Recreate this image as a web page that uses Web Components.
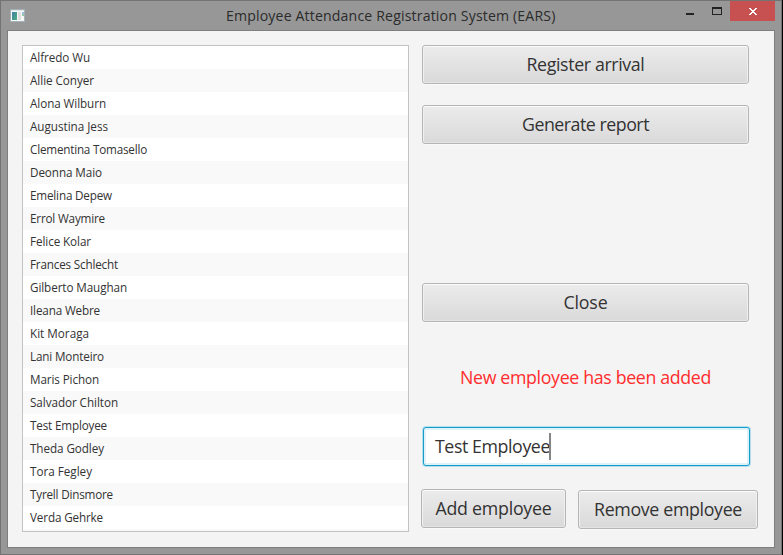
<!DOCTYPE html>
<html lang="en">
<head>
<meta charset="utf-8">
<title>Employee Attendance Registration System (EARS)</title>
<style>
html, body { margin: 0; height: 100%; overflow: hidden; font-family: "Open Sans", "Noto Sans", sans-serif; color: #333; }
</style>
</head>
<body>
<ears-window></ears-window>
<script>
// Single line of text whose tracking is adjusted to span a given width.
class FitText extends HTMLElement {
  constructor() {
    super();
    this.attachShadow({ mode: 'open' }).innerHTML =
      '<style>:host{display:inline-block;white-space:pre;line-height:inherit}span{display:inline-block}</style><span><slot></slot></span>';
  }
  connectedCallback() {
    const target = Number(this.getAttribute('width'));
    const span = this.shadowRoot.querySelector('span');
    const n = this.textContent.length;
    const natural = span.getBoundingClientRect().width;
    span.style.letterSpacing = ((target - natural) / n).toFixed(3) + 'px';
  }
}

class FxButton extends HTMLElement {
  constructor() {
    super();
    this.attachShadow({ mode: 'open' }).innerHTML = `<style>
      :host{display:block;height:39px;box-sizing:border-box}
      button{display:flex;align-items:center;justify-content:center;width:100%;height:39px;box-sizing:border-box;margin:0;padding:0 0 1px;
        border:1px solid #b5b5b5;border-radius:3px;background:linear-gradient(#ececec,#d9d9d9);
        box-shadow:inset 0 1px #fbfbfb,inset 1px 0 #f0f0f0,inset -1px 0 #f0f0f0,inset 0 -1px #e4e4e4,0 1px #f9f9f9;
        font:17.8px/24px "Open Sans","Noto Sans",sans-serif;color:#333}
    </style><button type="button"><slot></slot></button>`;
  }
}

class FxField extends HTMLElement {
  constructor() {
    super();
    this.attachShadow({ mode: 'open' }).innerHTML = `<style>
      :host{display:flex;align-items:center;box-sizing:border-box;width:327px;height:39px;padding:0 11px 1px 11px;
        border:1px solid #149ccb;border-radius:3px;background:#fff;
        box-shadow:0 0 0 1px #b5dfed,inset 0 0 0 2px #e0f2f9;font-size:17.8px;line-height:24px}
      i{width:2px;height:27px;background:#858585;margin:1px 0 0 -1px}
    </style><slot></slot><i></i>`;
  }
}

class EmployeeList extends HTMLElement {
  connectedCallback() {
    const rows = [['Alfredo Wu',60],['Allie Conyer',64],['Alona Wilburn',76],['Augustina Jess',78],['Clementina Tomasello',117],
      ['Deonna Maio',72],['Emelina Depew',82],['Errol Waymire',75],['Felice Kolar',61],['Frances Schlecht',88],
      ['Gilberto Maughan',97],['Ileana Webre',70],['Kit Moraga',59],['Lani Monteiro',74],['Maris Pichon',69],
      ['Salvador Chilton',88],['Test Employee',77],['Theda Godley',74],['Tora Fegley',62],['Tyrell Dinsmore',83],['Verda Gehrke',73]];
    this.attachShadow({ mode: 'open' }).innerHTML = `<style>
      :host{display:block;box-sizing:border-box;width:387px;height:487px;border:1px solid #c3c3c3;background:#fff;overflow:hidden}
      div{height:23px;box-sizing:border-box;padding-left:7px;font-size:11.7px;line-height:22px}
      div:nth-of-type(even){background:#f9f9f9}
    </style>` + rows.map(r => `<div><fit-text width="${r[1]}">${r[0]}</fit-text></div>`).join('') + '<div></div>';
  }
}

class TitleBar extends HTMLElement {
  connectedCallback() {
    this.attachShadow({ mode: 'open' }).innerHTML = `<style>
      :host{display:grid;grid-template-columns:216px 1fr 150px;height:29px;align-items:start}
      .icon{margin:8px 0 0 9px;display:block}
      .title{font-size:14.1px;line-height:29px;padding-left:9px;color:#2b2b2b}
      .controls{display:flex;justify-content:flex-end;padding-right:6px}
      svg{display:block}
    </style>
    <svg class="icon" width="16" height="14">
      <defs><linearGradient id="g" x2="1" y2="1"><stop stop-color="#457fa7"/><stop offset="1" stop-color="#4cad7b"/></linearGradient></defs>
      <rect x=".5" y=".5" width="14" height="12" fill="#f7f9f9" stroke="#a3b1b6"/>
      <path d="M1 1.5h13" stroke="#dce5e9"/>
      <rect x="2" y="3" width="5" height="8" fill="url(#g)"/>
      <rect x="8" y="3" width="3" height="8" fill="#dedede"/>
      <rect x="12" y="3" width="2" height="2" fill="#9bbcda"/><rect x="12" y="5" width="2" height="2" fill="#91c8a8"/>
    </svg>
    <div class="title"><fit-text width="329.5">Employee Attendance Registration System (EARS)</fit-text></div>
    <div class="controls">
      <svg width="88" height="20" shape-rendering="crispEdges">
        <rect x="43" width="45" height="20" fill="#c75050"/>
        <rect y="12" width="8" height="2" x="-1" fill="#222"/>
        <path d="M25 6h10v8h-10zM26 8v5h8v-5z" fill="#222" fill-rule="evenodd"/>
        <path d="M62 7h2v1h1v1h2v-1h1v-1h2v1h-1v1h-1v1h-1v1h1v1h1v1h1v1h-2v-1h-1v-1h-2v1h-1v1h-2v-1h1v-1h1v-1h1v-1h-1v-1h-1v-1h-1z" fill="#fff"/>
      </svg>
    </div>`;
    this.shadowRoot.querySelector('.controls svg').style.overflow = 'visible';
  }
}

class EarsWindow extends HTMLElement {
  connectedCallback() {
    this.attachShadow({ mode: 'open' }).innerHTML = `<style>
      :host{display:block;box-sizing:border-box;width:783px;height:555px;border-right:1px solid #000}
      .frame{box-sizing:border-box;width:782px;height:555px;border:1px solid #737373;background:#979797}
      .client{box-sizing:border-box;width:768px;height:518px;margin-left:6px;border:1px solid #7e7e7e;background:#f4f4f4;
        display:flex;align-items:flex-start;gap:13px;padding:14px 0 0 14px}
      .side{display:flex;flex-direction:column;align-items:flex-start;width:337px}
      .wide{width:327px}
      .b2{margin-top:21px}.b3{margin-top:139px}
      .msg{margin-top:43px;padding-left:38px;height:24px;color:#ff2d2d;font-size:17.8px;line-height:24px}
      fx-field{margin:38px 0 0 1px}
      .row{display:flex;gap:12px;margin:23px 0 0 -1px;align-items:flex-start}
      .add{width:145px}.rem{width:180px;margin-top:1px}
    </style>
    <div class="frame">
      <title-bar></title-bar>
      <div class="client">
        <employee-list></employee-list>
        <div class="side">
          <fx-button class="wide"><fit-text width="118">Register arrival</fit-text></fx-button>
          <fx-button class="wide b2"><fit-text width="127">Generate report</fit-text></fx-button>
          <fx-button class="wide b3"><fit-text width="44">Close</fit-text></fx-button>
          <div class="msg"><fit-text width="251">New employee has been added</fit-text></div>
          <fx-field><fit-text width="115">Test Employee</fit-text></fx-field>
          <div class="row">
            <fx-button class="add"><fit-text width="116">Add employee</fit-text></fx-button>
            <fx-button class="rem"><fit-text width="148">Remove employee</fit-text></fx-button>
          </div>
        </div>
      </div>
    </div>`;
  }
}
customElements.define('fit-text', FitText);
customElements.define('fx-button', FxButton);
customElements.define('fx-field', FxField);
customElements.define('employee-list', EmployeeList);
customElements.define('title-bar', TitleBar);
customElements.define('ears-window', EarsWindow);
</script>
</body>
</html>
